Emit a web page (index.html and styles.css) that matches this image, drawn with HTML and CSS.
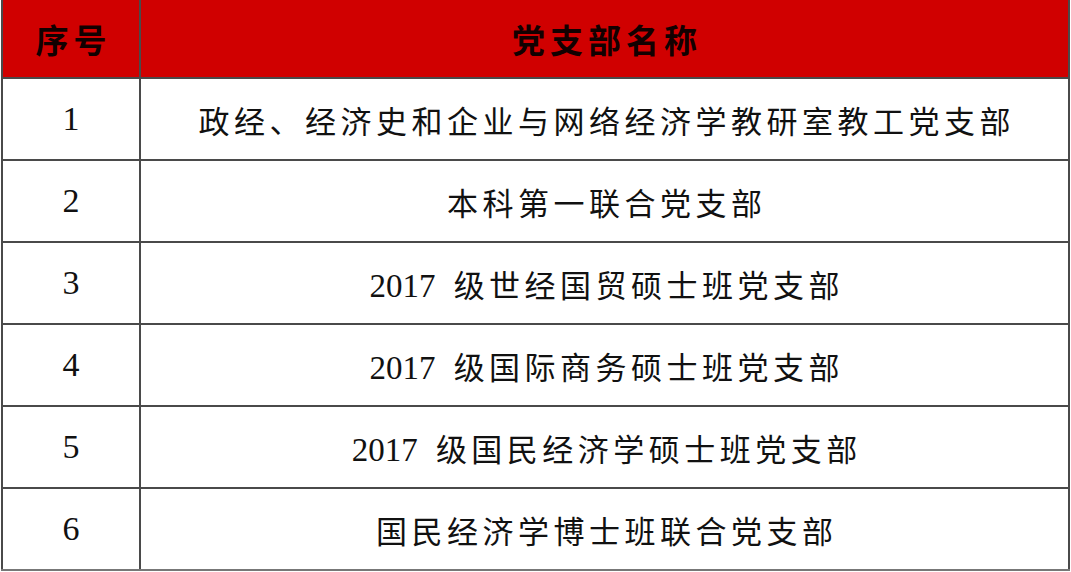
FILE: index.html
```html
<!DOCTYPE html>
<html lang="zh-CN">
<head>
<meta charset="utf-8">
<title>党支部名称</title>
<link rel="stylesheet" href="styles.css">
</head>
<body>
<table class="branches">
  <thead>
    <tr class="head-row">
      <th class="col-no">序号</th>
      <th class="col-name">党支部名称</th>
    </tr>
  </thead>
  <tbody>
    <tr><td class="no">1</td><td class="name">政经、经济史和企业与网络经济学教研室教工党支部</td></tr>
    <tr><td class="no">2</td><td class="name">本科第一联合党支部</td></tr>
    <tr><td class="no">3</td><td class="name"><span class="year">2017</span> 级世经国贸硕士班党支部</td></tr>
    <tr><td class="no">4</td><td class="name"><span class="year">2017</span> 级国际商务硕士班党支部</td></tr>
    <tr><td class="no">5</td><td class="name"><span class="year">2017</span> 级国民经济学硕士班党支部</td></tr>
    <tr><td class="no">6</td><td class="name">国民经济学博士班联合党支部</td></tr>
  </tbody>
</table>
</body>
</html>
```

FILE: styles.css
```css
html, body {
  margin: 0;
  padding: 0;
  background: #ffffff;
}

.branches {
  margin: 0 0 0 1px;
  width: 1069px;
  border-collapse: collapse;
  table-layout: fixed;
  font-family: "Liberation Serif", "Noto Sans CJK SC", serif;
  color: #111;
}

.branches th,
.branches td {
  border: 2px solid #4a4a4a;
  text-align: center;
  vertical-align: middle;
  padding: 0;
}

.branches th {
  border-top: none;
  background: #d00000;
  color: #120000;
  font-family: "Noto Sans CJK SC", sans-serif;
  font-weight: 700;
  font-size: 33px;
  letter-spacing: 5px;
  text-indent: 5px;
}

.head-row {
  height: 78px;
}

.col-no {
  width: 136px;
}

.branches tbody tr {
  height: 82px;
}

.branches tbody tr:last-child td {
  border-bottom-color: #777;
}

.no {
  font-size: 34px;
  font-weight: 400;
}

.name {
  font-size: 31px;
  font-weight: 400;
  letter-spacing: 4.5px;
  text-indent: 4.5px;
}

.year {
  font-size: 33px;
  letter-spacing: 0;
  margin-right: 6px;
}
```
